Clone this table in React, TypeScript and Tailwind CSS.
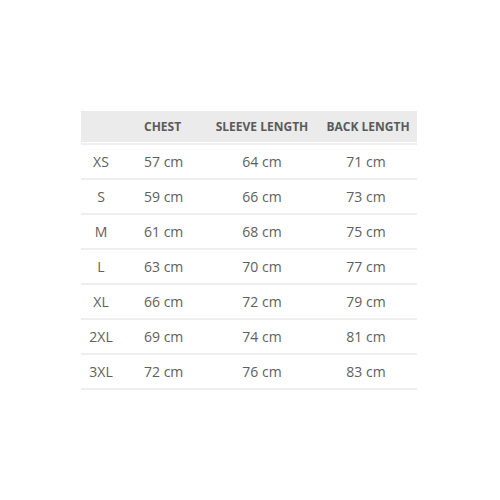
const rows = [
    { size: "XS", chest: "57 cm", sleeve: "64 cm", back: "71 cm" },
    { size: "S", chest: "59 cm", sleeve: "66 cm", back: "73 cm" },
    { size: "M", chest: "61 cm", sleeve: "68 cm", back: "75 cm" },
    { size: "L", chest: "63 cm", sleeve: "70 cm", back: "77 cm" },
    { size: "XL", chest: "66 cm", sleeve: "72 cm", back: "79 cm" },
    { size: "2XL", chest: "69 cm", sleeve: "74 cm", back: "81 cm" },
    { size: "3XL", chest: "72 cm", sleeve: "76 cm", back: "83 cm" },
];

export default function App() {
    return (
        <div className="w-[500px] h-[500px] bg-white pt-[111px] pl-[81px] font-['Open_Sans',sans-serif]">
            <div className="w-[336px]">
                <div className="flex h-[31px] items-center bg-[#ebebeb] mb-px text-[12px] font-bold text-[#5a5a5a]">
                    <div className="w-[40px]" />
                    <div className="w-[84px] pl-[23px]">CHEST</div>
                    <div className="w-[114px] text-center">SLEEVE LENGTH</div>
                    <div className="w-[98px] text-center">BACK LENGTH</div>
                </div>
                <div className="border-t-2 border-[#eeeeee]">
                    {rows.map((r) => (
                        <div
                            key={r.size}
                            className="flex h-[35px] items-center border-b-2 border-[#eeeeee] text-[14px] text-[#606060]"
                        >
                            <div className="w-[40px] text-center">{r.size}</div>
                            <div className="w-[84px] pl-[23px]">{r.chest}</div>
                            <div className="w-[114px] text-center">{r.sleeve}</div>
                            <div className="w-[98px] text-center pr-[4px]">{r.back}</div>
                        </div>
                    ))}
                </div>
            </div>
        </div>
    );
}
